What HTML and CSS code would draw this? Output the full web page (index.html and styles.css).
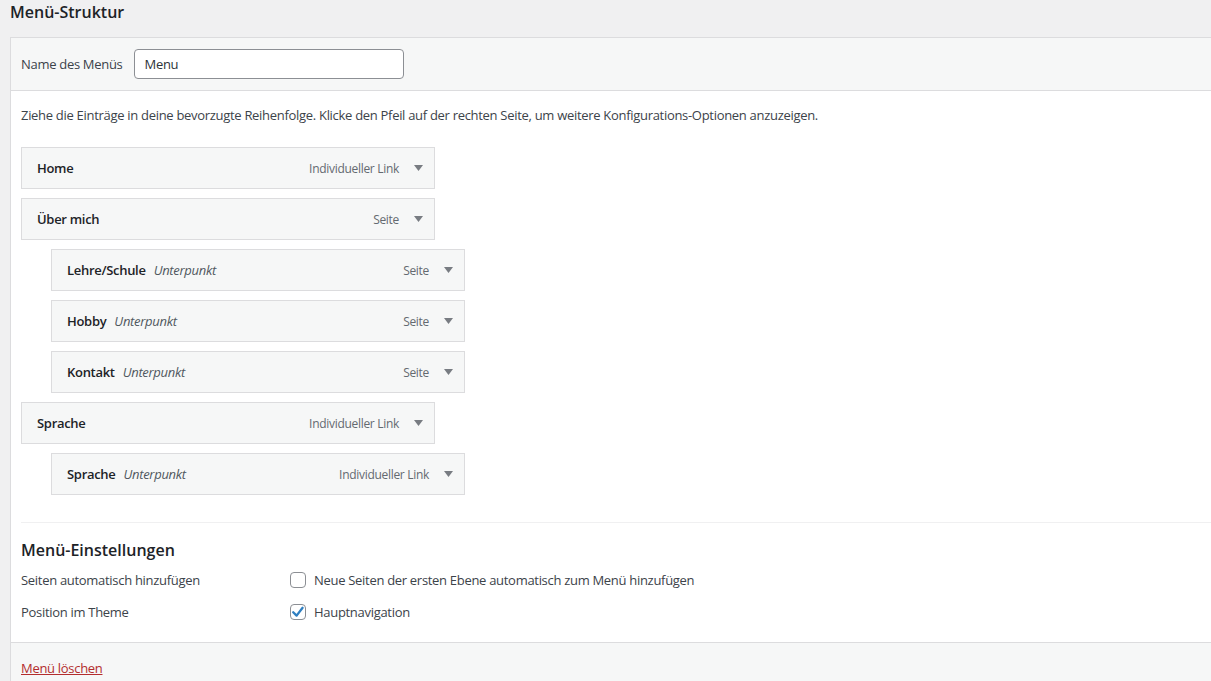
FILE: index.html
```html
<!DOCTYPE html>
<html lang="de">
<head>
<meta charset="utf-8">
<title>Menü-Struktur</title>
<link rel="stylesheet" href="styles.css">
</head>
<body>
<div class="page">
  <h2 class="page-title">Menü-Struktur</h2>
  <div class="menu-box">
    <div class="menu-header">
      <label class="name-label" for="menu-name">Name des Menüs</label>
      <input class="name-input" id="menu-name" type="text" value="Menu">
    </div>
    <div class="menu-body">
      <p class="instructions">Ziehe die Einträge in deine bevorzugte Reihenfolge. Klicke den Pfeil auf der rechten Seite, um weitere Konfigurations-Optionen anzuzeigen.</p>
      <ul class="menu-list">
        <li class="item">
          <div class="handle"><span class="item-title">Home</span><span class="item-type">Individueller Link</span><span class="arrow"><svg width="9" height="6" viewBox="0 0 9 6"><polygon points="0,0 9,0 4.5,6" fill="#787c82"/></svg></span></div>
        </li>
        <li class="item">
          <div class="handle"><span class="item-title">Über mich</span><span class="item-type">Seite</span><span class="arrow"><svg width="9" height="6" viewBox="0 0 9 6"><polygon points="0,0 9,0 4.5,6" fill="#787c82"/></svg></span></div>
        </li>
        <li class="item sub">
          <div class="handle"><span class="item-title">Lehre/Schule</span><span class="sub-label">Unterpunkt</span><span class="item-type">Seite</span><span class="arrow"><svg width="9" height="6" viewBox="0 0 9 6"><polygon points="0,0 9,0 4.5,6" fill="#787c82"/></svg></span></div>
        </li>
        <li class="item sub">
          <div class="handle"><span class="item-title">Hobby</span><span class="sub-label">Unterpunkt</span><span class="item-type">Seite</span><span class="arrow"><svg width="9" height="6" viewBox="0 0 9 6"><polygon points="0,0 9,0 4.5,6" fill="#787c82"/></svg></span></div>
        </li>
        <li class="item sub">
          <div class="handle"><span class="item-title">Kontakt</span><span class="sub-label">Unterpunkt</span><span class="item-type">Seite</span><span class="arrow"><svg width="9" height="6" viewBox="0 0 9 6"><polygon points="0,0 9,0 4.5,6" fill="#787c82"/></svg></span></div>
        </li>
        <li class="item">
          <div class="handle"><span class="item-title">Sprache</span><span class="item-type">Individueller Link</span><span class="arrow"><svg width="9" height="6" viewBox="0 0 9 6"><polygon points="0,0 9,0 4.5,6" fill="#787c82"/></svg></span></div>
        </li>
        <li class="item sub">
          <div class="handle"><span class="item-title">Sprache</span><span class="sub-label">Unterpunkt</span><span class="item-type">Individueller Link</span><span class="arrow"><svg width="9" height="6" viewBox="0 0 9 6"><polygon points="0,0 9,0 4.5,6" fill="#787c82"/></svg></span></div>
        </li>
      </ul>
      <div class="settings">
        <h3 class="settings-title">Menü-Einstellungen</h3>
        <div class="setting-row">
          <span class="setting-label">Seiten automatisch hinzufügen</span>
          <span class="setting-field"><span class="checkbox"></span><span>Neue Seiten der ersten Ebene automatisch zum Menü hinzufügen</span></span>
        </div>
        <div class="setting-row">
          <span class="setting-label">Position im Theme</span>
          <span class="setting-field"><span class="checkbox checked"><svg width="14" height="14" viewBox="0 0 14 14"><polyline points="2.2,7.2 5.6,10.6 11.6,2.8" fill="none" stroke="#2f7fc1" stroke-width="2.3" stroke-linecap="round" stroke-linejoin="round"/></svg></span><span>Hauptnavigation</span></span>
        </div>
      </div>
    </div>
    <div class="menu-footer">
      <a class="delete-link" href="#">Menü löschen</a>
    </div>
  </div>
</div>
</body>
</html>
```

FILE: styles.css
```css
html, body {
  margin: 0;
  padding: 0;
  overflow: hidden;
  background: #f0f0f1;
}
body {
  font-family: "Open Sans", "Noto Sans", sans-serif;
  font-size: 13px;
  letter-spacing: -0.3px;
  color: #3c434a;
  width: 1211px;
  height: 681px;
}
.page {
  padding-left: 10px;
}
.page-title {
  margin: 0;
  height: 37px;
  line-height: 25px;
  font-size: 16px;
  font-weight: 600;
  letter-spacing: 0;
  color: #1d2327;
}
.menu-box {
  margin-right: -30px;
  border: 1px solid #dcdcde;
  background: #fff;
}
.menu-header {
  display: flex;
  align-items: center;
  height: 52px;
  padding: 0 10px;
  background: #f6f7f7;
  border-bottom: 1px solid #dcdcde;
}
.name-label {
  margin-right: 12px;
  color: #3c434a;
}
.name-input {
  box-sizing: border-box;
  width: 270px;
  height: 30px;
  padding: 0 9px;
  border: 1px solid #8c8f94;
  border-radius: 4px;
  font-family: inherit;
  font-size: 13px;
  letter-spacing: -0.3px;
  color: #2c3338;
  background: #fff;
}
.menu-body {
  padding: 14px 10px 0;
}
.instructions {
  margin: 0 0 22px;
  line-height: 20px;
}
.menu-list {
  list-style: none;
  margin: 0;
  padding: 0;
  display: flex;
  flex-direction: column;
  gap: 9px;
}
.item.sub {
  padding-left: 30px;
}
.handle {
  box-sizing: border-box;
  width: 414px;
  height: 42px;
  display: flex;
  align-items: center;
  padding: 0 11px 0 15px;
  background: #f6f7f7;
  border: 1px solid #dcdcde;
}
.item-title {
  font-weight: 600;
  color: #1d2327;
}
.sub-label {
  margin-left: 8px;
  font-style: italic;
  color: #50575e;
}
.item-type {
  margin-left: auto;
  color: #646970;
  font-size: 12px;
}
.arrow {
  display: flex;
  margin-left: 15px;
  width: 9px;
}
.settings {
  margin-top: 27px;
  border-top: 1px solid #f0f0f1;
  padding-top: 15px;
  padding-bottom: 14px;
}
.settings-title {
  margin: 0 0 2px;
  font-size: 16px;
  line-height: 24px;
  font-weight: 600;
  letter-spacing: 0;
  color: #1d2327;
}
.setting-row {
  display: flex;
  align-items: center;
  height: 32px;
}
.setting-label {
  width: 269px;
  color: #3c434a;
}
.setting-field {
  display: flex;
  align-items: center;
}
.checkbox {
  box-sizing: border-box;
  width: 16px;
  height: 16px;
  margin-right: 8px;
  border: 1px solid #8c8f94;
  border-radius: 4px;
  background: #fff;
  display: flex;
  align-items: center;
  justify-content: center;
}
.menu-footer {
  height: 50px;
  padding: 0 10px;
  display: flex;
  align-items: center;
  background: #f6f7f7;
  border-top: 1px solid #dcdcde;
}
.delete-link {
  color: #b32d2e;
  text-decoration: underline;
}
```
